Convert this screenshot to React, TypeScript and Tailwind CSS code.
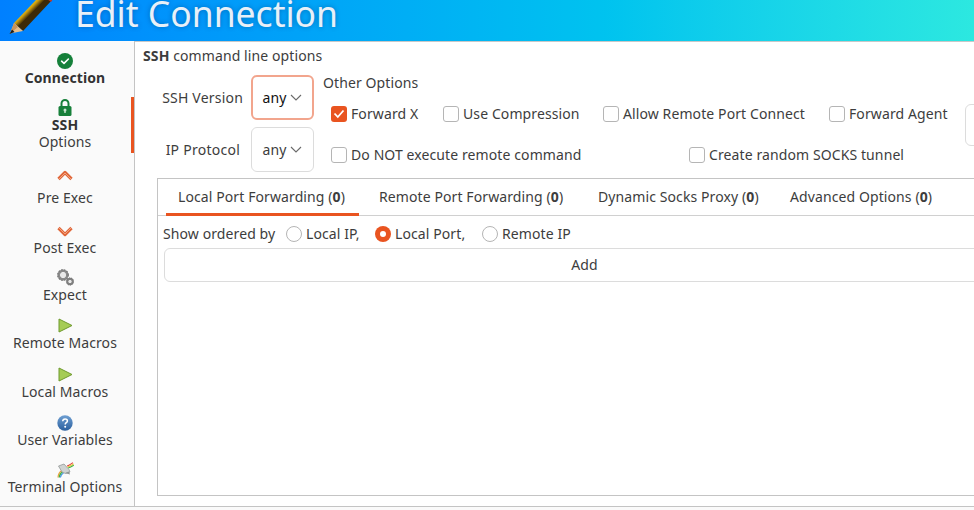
import React from "react";

const Check = () => (
  <svg width="16" height="16" viewBox="0 0 16 16"><circle cx="8" cy="8" r="8" fill="#15803a" /><path d="M4.6 8.2 7 10.4 11.4 6" fill="none" stroke="#fff" strokeWidth="1.6" strokeLinecap="round" strokeLinejoin="round" /></svg>
);
const Lock = () => (
  <svg width="14" height="17" viewBox="0 0 14 17"><path d="M3.5 8V4.5a3.5 3.5 0 0 1 7 0V8" fill="none" stroke="#17803a" strokeWidth="2" /><rect x="0.5" y="7" width="13" height="10" rx="1.5" fill="#17803a" /><circle cx="7" cy="11" r="1.5" fill="#c9e4d0" /><rect x="6.3" y="11" width="1.4" height="3" fill="#c9e4d0" /></svg>
);
const Chevron = ({ up }: { up?: boolean }) => (
  <svg width="16" height="11" viewBox="0 0 16 11"><path d={up ? "M1.5 9 8 2.5 14.5 9" : "M1.5 2 8 8.5 14.5 2"} fill="none" stroke="#e0673a" strokeWidth="3.2" strokeLinejoin="round" /><path d={up ? "M2 9 8 3 14 9" : "M2 2 8 8 14 2"} fill="none" stroke="#f2a27e" strokeWidth="1" /></svg>
);
const Gears = () => (
  <svg width="17" height="17" viewBox="0 0 17 17"><circle cx="6" cy="6" r="4.2" fill="none" stroke="#8a8a8a" strokeWidth="2.6" /><circle cx="6" cy="6" r="5.3" fill="none" stroke="#777" strokeWidth="1.2" strokeDasharray="1.6 1.2" /><circle cx="6" cy="6" r="2.6" fill="#e8e8e8" /><circle cx="13" cy="12.5" r="2.6" fill="none" stroke="#808080" strokeWidth="2.2" /><circle cx="13" cy="12.5" r="3.6" fill="none" stroke="#777" strokeWidth="1" strokeDasharray="1.2 1" /><circle cx="13" cy="12.5" r="1.4" fill="#e8e8e8" /></svg>
);
const Play = () => (
  <svg width="15" height="15" viewBox="0 0 15 15"><path d="M1 1 14 7.5 1 14Z" fill="#a5cc55" stroke="#6f9a2e" strokeWidth="1" strokeLinejoin="round" /></svg>
);
const Help = ({ id }: { id: string }) => (
  <svg width="16" height="16" viewBox="0 0 16 16"><defs><linearGradient id={id} x1="0" y1="0" x2="0" y2="1"><stop offset="0" stopColor="#6f9fd2" /><stop offset="1" stopColor="#2a5f9e" /></linearGradient></defs><circle cx="8" cy="8" r="7.7" fill={`url(#${id})`} /><path d="M5.7 6.2C5.8 4.8 6.8 4 8.1 4c1.4 0 2.3.8 2.3 2 0 1.7-2.2 1.7-2.2 3.4" fill="none" stroke="#fff" strokeWidth="1.5" /><circle cx="8.2" cy="11.7" r="1" fill="#fff" /></svg>
);
const Terminal = () => (
  <svg width="17" height="16" viewBox="0 0 17 16">
    <path d="M1 15.5C1.2 12 2.5 10 5 8.5" fill="none" stroke="#e8a23a" strokeWidth="1.2" />
    <path d="M2.2 15.5C2.5 12.8 3.5 11 6 9.6" fill="none" stroke="#3cb043" strokeWidth="1.2" />
    <path d="M3.4 15.5C3.7 13.5 4.5 12 6.5 11" fill="none" stroke="#3a8fe0" strokeWidth="1.2" />
    <path d="M1.5 4 7 2l5 5.5 1 2.5-4.5 1.5L5 10Z" fill="#cfd3d2" stroke="#8a8f8e" strokeWidth=".7" />
    <path d="M8 11l5 1.5-1-3Z" fill="#8f9593" />
    <path d="M10 4C12 3.5 13.5 2 16 .8" fill="none" stroke="#e23a3a" strokeWidth="1.1" />
    <path d="M10.6 5C12.6 4.5 14.5 3.2 16.6 2" fill="none" stroke="#e8c83a" strokeWidth="1.1" />
    <path d="M11.2 6C13.2 5.5 15 4.4 16.8 3.2" fill="none" stroke="#3cb043" strokeWidth="1.1" />
  </svg>
);
const Pencil = () => (
  <svg width="60" height="41" viewBox="0 0 60 41" className="shrink-0">
    <defs>
      <linearGradient id="pb" gradientUnits="userSpaceOnUse" x1="15" y1="8" x2="26" y2="19">
        <stop offset="0" stopColor="#4a3208" />
        <stop offset="0.25" stopColor="#b98a12" />
        <stop offset="0.5" stopColor="#ffd60a" />
        <stop offset="0.72" stopColor="#c99a10" />
        <stop offset="1" stopColor="#3d2a08" />
      </linearGradient>
    </defs>
    <path d="M14 23 37 -1 53 -1 23 31Z" fill="url(#pb)" />
    <path d="M14 23 23 31 10 33.5Z" fill="#e6bd8c" />
    <path d="M14 23 18 27 10 33.5Z" fill="#c9935a" />
    <path d="M12 29.5 14.5 32 9.5 34Z" fill="#1c1c1c" />
    <path d="M47 -1 53 -1 51 2Z" fill="#c0392b" />
  </svg>
);
const Chev = () => (
  <svg width="12" height="7" viewBox="0 0 12 7" className="ml-[4px]"><path d="M1 1l5 5 5-5" fill="none" stroke="#6a6a6a" strokeWidth="1.1" /></svg>
);

const Select = ({ focused }: { focused?: boolean }) => (
  <div className={`w-[63px] h-[45px] rounded-[6px] flex items-center justify-center bg-white ${focused ? "border-2 border-[#f2a58d]" : "border border-[#dcdcdc]"}`}>
    <span className={focused ? "text-[#111]" : "text-[#3d3d3d]"}>any</span>
    <Chev />
  </div>
);

const Box = ({ checked }: { checked?: boolean }) =>
  checked ? (
    <span className="w-[16px] h-[16px] rounded-[3px] bg-[#e95420] flex items-center justify-center shrink-0">
      <svg width="12" height="10" viewBox="0 0 12 10"><path d="M1.5 4.5 4.8 8 10.5 1.5" fill="none" stroke="#fff" strokeWidth="1.8" /></svg>
    </span>
  ) : (
    <span className="w-[16px] h-[16px] rounded-[3px] border border-[#b5b5b5] bg-white shrink-0" />
  );

const Opt = ({ label, checked, className }: { label: string; checked?: boolean; className?: string }) => (
  <div className={`flex items-center gap-[4px] whitespace-nowrap ${className ?? ""}`}>
    <Box checked={checked} />
    <span className="pb-[2px]">{label}</span>
  </div>
);

const Radio = ({ label, on, className }: { label: string; on?: boolean; className?: string }) => (
  <div className={`flex items-center gap-[4px] whitespace-nowrap ${className ?? ""}`}>
    {on ? (
      <span className="w-[16px] h-[16px] rounded-full bg-[#e95420] flex items-center justify-center"><span className="w-[6px] h-[6px] rounded-full bg-white" /></span>
    ) : (
      <span className="w-[16px] h-[16px] rounded-full border border-[#b5b5b5] bg-white" />
    )}
    <span>{label}</span>
  </div>
);

const Side = ({ icon, label, bold, sub, className, iconClass }: { icon: React.ReactNode; label: string; bold?: boolean; sub?: string; className?: string; iconClass?: string }) => (
  <div className={`flex flex-col items-center leading-[17px] ${className ?? ""}`}>
    <div className={`h-[17px] flex items-center justify-center ${iconClass ?? ""}`}>{icon}</div>
    <div className={bold ? "font-bold text-[#333]" : "text-[#3d3d3d]"}>{label}</div>
    {sub && <div className="text-[#3d3d3d]">{sub}</div>}
  </div>
);

const Tab = ({ label, active, className }: { label: string; active?: boolean; className?: string }) => (
  <div className={`h-[37px] flex items-center whitespace-nowrap shrink-0 ${active ? "border-b-[3px] border-[#e95420] pt-[1px]" : "pb-[2px]"} ${className ?? ""}`}>
    <span>{label} (<b>0</b>)</span>
  </div>
);

export default function App() {
  return (
    <div className="w-[974px] h-[510px] overflow-hidden bg-white flex flex-col text-[14px] tracking-[0.1px] text-[#3d3d3d] font-['Noto_Sans',sans-serif]">
      <header className="relative h-[41px] shrink-0 flex items-center overflow-hidden bg-gradient-to-r from-[#0080ff] to-[#2ce8e0]">
        <Pencil />
        <h1 className="ml-[15px] -mt-[15px] text-[35.5px] leading-[41px] text-[#e8f0f8] tracking-[0px] whitespace-nowrap [text-shadow:0_0_5px_rgba(0,50,110,0.45)]">Edit Connection</h1>
      </header>
      <div className="h-px shrink-0 bg-[#c8c8c8] -mb-px relative" />
      <div className="flex-1 flex min-h-0">
        <aside className="w-[135px] shrink-0 bg-[#fafafa] border-r border-[#c4c4c4] pt-[11px] pr-[4px] relative">
          <div className="absolute right-0 top-[56px] w-[3px] h-[56px] bg-[#e95420]" />
          <Side icon={<Check />} label="Connection" bold />
          <Side icon={<Lock />} label="SSH" bold sub="Options" className="mt-[13px]" />
          <Side icon={<Chevron up />} label="Pre Exec" className="mt-[17px]" iconClass="mb-[5px]" />
          <Side icon={<Chevron />} label="Post Exec" className="mt-[16px]" iconClass="pt-[1px]" />
          <Side icon={<Gears />} label="Expect" className="mt-[13px]" />
          <Side icon={<Play />} label="Remote Macros" className="mt-[14px]" />
          <Side icon={<Play />} label="Local Macros" className="mt-[15px]" />
          <Side icon={<Help id="hb" />} label="User Variables" className="mt-[14px]" />
          <Side icon={<Terminal />} label="Terminal Options" className="mt-[13px]" />
        </aside>
        <main className="flex-1 min-w-0 pl-[8px] flex flex-col">
          <div className="h-[30px] flex items-center -mt-[1px] mb-[1px]"><span><b>SSH</b> command line options</span></div>
          <div className="flex h-[107px] shrink-0">
            <div className="w-[100px] shrink-0 flex flex-col gap-[7px] pt-[4px] text-right">
              <div className="h-[45px] flex items-center justify-end tracking-[0.2px]">SSH Version</div>
              <div className="h-[45px] flex items-center justify-end pr-[3px] tracking-[0.25px]">IP Protocol</div>
            </div>
            <div className="w-[63px] ml-[8px] shrink-0 flex flex-col gap-[7px] pt-[4px]">
              <Select focused />
              <Select />
            </div>
            <div className="ml-[9px] flex-1 min-w-0 pt-[1px]">
              <div className="h-[20px] flex items-center">Other Options</div>
              <div className="flex items-center h-[44px] pl-[8px] relative">
                <Opt label="Forward X" checked className="w-[112px]" />
                <Opt label="Use Compression" className="w-[160px]" />
                <Opt label="Allow Remote Port Connect" className="w-[226px]" />
                <Opt label="Forward Agent" />
                <div className="absolute left-[642px] top-[12px] w-[40px] h-[42px] rounded-[6px] border border-[#dcdcdc]" />
              </div>
              <div className="flex items-center h-[38px] pl-[8px]">
                <Opt label="Do NOT execute remote command" className="w-[358px]" />
                <Opt label="Create random SOCKS tunnel" />
              </div>
            </div>
          </div>
          <div className="ml-[14px] mr-[-2px] h-[318px] border border-[#c4c4c4] flex flex-col">
            <div className="h-[37px] border-b border-[#d0d0d0] flex shrink-0">
              <Tab label="Local Port Forwarding" active className="ml-[8px] w-[193px] pl-[12px]" />
              <Tab label="Remote Port Forwarding" className="w-[219px] pl-[20px]" />
              <Tab label="Dynamic Socks Proxy" className="w-[192px] pl-[20px]" />
              <Tab label="Advanced Options" className="pl-[20px]" />
            </div>
            <div className="h-[32px] pl-[5px] pt-[3px] flex items-center shrink-0">
              <span className="w-[123px] shrink-0">Show ordered by</span>
              <Radio label="Local IP," className="w-[89px]" />
              <Radio label="Local Port," on className="w-[107px]" />
              <Radio label="Remote IP" />
            </div>
            <div className="ml-[6px] mr-[-32px] h-[34px] shrink-0 rounded-[6px] border border-[#dcdcdc] flex items-center justify-center pb-[2px] pr-[2px]">Add</div>
          </div>
        </main>
      </div>
      <div className="h-[4px] shrink-0 border-t border-[#c4c4c4] bg-[#fafafa]" />
    </div>
  );
}
